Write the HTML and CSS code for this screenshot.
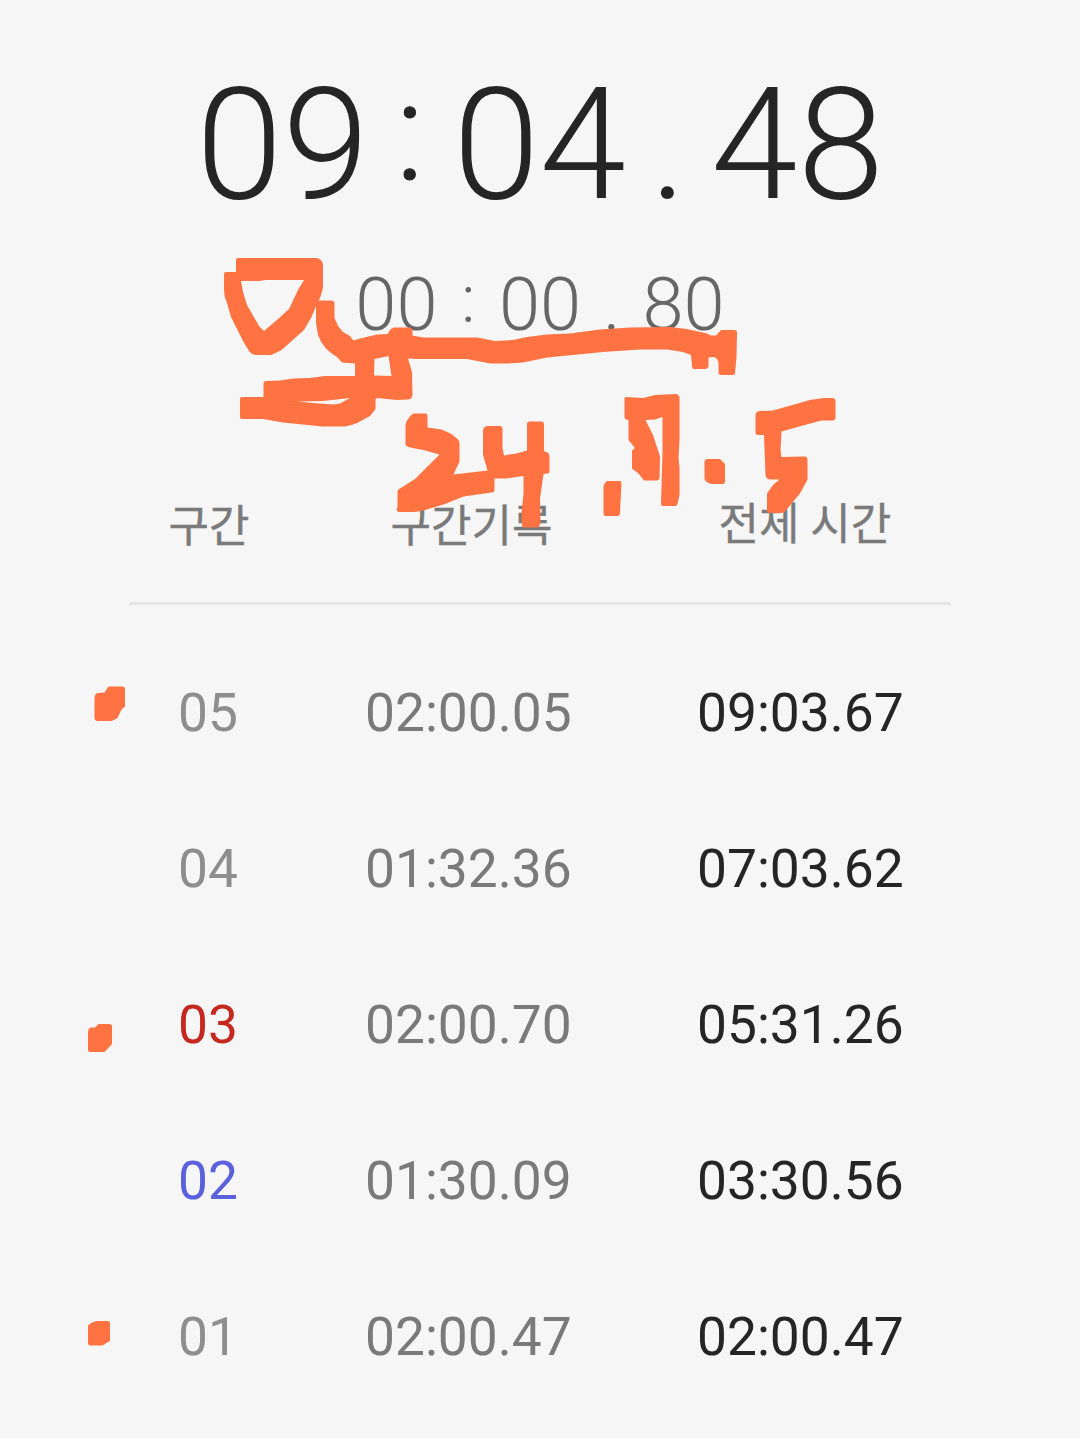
FILE: index.html
```
<!DOCTYPE html>
<html lang="ko">
<head>
    <meta charset="UTF-8">
    <meta name="viewport" content="width=device-width, initial-scale=1.0">
    <title>스톱워치</title>

    <link rel="stylesheet" href="styles.css">
</head>
<body>

<div class="stopwatch">
    <div class="total-time">
        <span>09</span><span class="colon">:</span><span>04</span><span class="dot">.</span><span>48</span>
    </div>
    <div class="lap-time">
        <span>00</span><span class="colon">:</span><span>00</span><span class="dot">.</span><span>80</span>
    </div>

    <div class="lap-header">
        <span>구간</span>
        <span>구간기록</span>
        <span class="header-total">전체 시간</span>
    </div>

    <div class="lap-list">
        <div class="lap">
            <span class="number">05</span>
            <span class="split">02:00.05</span>
            <span class="total">09:03.67</span>
        </div>
        <div class="lap">
            <span class="number">04</span>
            <span class="split">01:32.36</span>
            <span class="total">07:03.62</span>
        </div>
        <div class="lap slowest">
            <span class="number">03</span>
            <span class="split">02:00.70</span>
            <span class="total">05:31.26</span>
        </div>
        <div class="lap fastest">
            <span class="number">02</span>
            <span class="split">01:30.09</span>
            <span class="total">03:30.56</span>
        </div>
        <div class="lap">
            <span class="number">01</span>
            <span class="split">02:00.47</span>
            <span class="total">02:00.47</span>
        </div>
    </div>

    <!-- 펜 메모 -->
    <svg class="marker" width="1080" height="1438" viewBox="0 0 1080 1438" aria-hidden="true">
        <path d="M236 260Q236 258 238 258L317 258Q323 260 323 265L323 288Q321 297 317 304L311.500 317L304 330L295 338L281.500 350Q274 354 271 355L255 355Q251 354 249 351L243 341L231 317L227 303Q224 297 224 290L224 274Q224 272 226 272L236 272ZM241 281L243 292L247 305L259 326L264 331L278 319L289 309L298 290L304 280L265 280L260 281Z"/>
        <path d="M316 303Q317 300.500 319 300.500L332 300.500Q334.500 301 334.500 303L334.500 318L338 326L343 332L350 336L353.500 340.500L362 338L377 334.500L388 334Q389 329 394 327.500L410 327.500Q412.500 328 412.500 330L412.500 335.500L423 337.500L477 337.500L495 341L513 340L527 337L547 334.500L570 333.500L600 329.500L630 327.500L670 327L687 329L707 333.500L711 335.500L716 335.500L721 330L735 330Q737 330.500 737 332L736.500 357L735 373Q735 375 733 375L720 375Q718.500 374 718.500 372L718.500 363Q717 356 712 357L708.500 357.500L708.500 366Q708 369 705 369L694 369Q692 369 692 366L691 355L683 352L667 349.500L640 349.500L603 352L573 355L547 357.500L535 360L523 362.500L508 363.500L490 363.500L467 359L417 359L408 358.500L412 372L412.500 395Q412 399 408 399.500L397 400L377 398L375.500 399.500L375.500 409Q371 415 370 416L357 423Q350 426 345 426.500L322 426.500L283 422.500L263 419L242 419Q240 419 240 417L240 399Q240 397 242 397L263.500 397L263.500 383Q264 381 266 381L280 380.500L293 378.500L310 378L325 376L355 376L355 363.500L342 362.500L337 357Q323 349 318 335L316 323ZM374.500 359L388.500 356L391.500 376L374 375.500ZM298 401.500L323 401L350 398L340 403.500L333 404.500L313 403Z"/>
        <path d="M413 413.500L426 413.500Q427.500 414 427.500 416L427.500 427.500L441.500 429.500L451.500 434L457.500 439Q459.500 441 459.500 443L459.500 461.500L453.500 474.500L487.500 470.500L486 465L483 455L483 430Q484 426.500 487 426L500.500 426Q502.500 426.500 502.500 428.500L502.500 448L504 455.500L516.500 453.500L527 450.500L527 424Q527 421.500 529.500 421.500L542 421.500Q544 422 544 424L544 451L547.500 452.500Q549.500 453.500 549.500 457L549.500 471.500Q549.500 473.500 547.500 473.500L543.500 474L540 498.500L540.500 523Q539.500 527.500 536.500 527.500L525 527.500Q522 527.500 522 525L521.500 513.500L523.500 493.500L523.500 476L506.500 478.500L494.500 478.500L494.500 490Q494.500 492.500 491.500 492.500L463.500 496.500L445 504L423.500 510.500L413.500 512L399.500 512Q397.500 512 397.500 509.500L397.500 491.500Q398 489 400 488.500L415 479L426.500 467.500L439.500 454.500L423.500 450L410 447.500Q405.500 446 405.500 444L405.500 425Q406.500 419 413 413.500Z"/>
        <path d="M607 481L620 481Q621.500 481.500 621.500 483.500L620.500 502L620 513.500Q619.500 516 617.500 516L605.500 516Q603.500 516 603.500 513.500L603.500 486Q604 483 607 481Z"/>
        <path d="M626 397L643 398L655 395L676 394Q679.500 395 679.500 397.500L679.500 440L678.500 458L679.500 468L679.500 495L677.500 504Q677 506 675 506L663 506Q661 506 661 503.500L662.500 453L662.500 417L655 419.500L645.500 420L653 435L660 456.500L659.500 478Q659 480.500 656.500 480.500L644 480.500L638.500 473.500L632 468.500L632 450.500L635 448L628.500 440L628.500 420L626 419.500Q624.500 418 624.500 417L624.500 399Q624.500 397 626 397Z"/>
        <path d="M707 459L720 459L725 464L725 482Q725 484 722.500 484L712 484Q706 483 704.500 479L704.500 461.500Q705 459 707 459Z"/>
        <path d="M773 410.500L810 400L823.500 398L833 398Q835.500 398.500 835.500 401L835.500 417.500Q835.500 420.500 832.500 420.500L821.500 420.500L806.500 424.500L781.500 431.500L780.500 450L781.500 457L805 456.500Q807.500 457 807.500 459.500L807.500 479.500L800 493.500L791.500 503.500L786.500 510Q784 513 781.500 513L770 513Q767 513 767 510L767 493.500L773 485L779.500 479.500L770 479.500Q766 479 765.500 475L764 435L758.500 435Q755.500 435 755.500 432.500L755.500 415Q756 411 760 411Z"/>
        <path d="M108.500 686.500L123 686.500Q125 687 125 688.500L125 706.500L121.500 709.500L117.500 718L111.500 721L97.500 721Q94.500 720.500 94.500 718L94.500 698Q95 693 98 693L104.500 692.500Z"/>
        <path d="M98.500 1024L110 1024Q112 1024.500 112 1026L112 1044L104.500 1052L90.500 1052Q88 1052 88 1050L88 1031.500Q88.500 1028 91 1027.500L95 1027.500Z"/>
        <path d="M96 1321L108 1321Q110 1321.500 110 1323L110 1341L107 1342.500L102.500 1345.500L90 1345.500Q88 1345 88 1343L88 1325.500Q91 1322 96 1321Z"/>
    </svg>
</div>

</body>
</html>
```
FILE: styles.css
```
body {
    margin: 0;
    background-color: #f6f6f6;
    font-family: Roboto, "Noto Sans CJK KR", sans-serif;
    color: #252525;
}

.stopwatch {
    position: relative;
    width: 1080px;
    height: 1438px;
    overflow: hidden;
}

.total-time,
.lap-time {
    display: flex;
    justify-content: center;
    font-weight: 300;
}

.total-time {
    padding-top: 54px;
    font-size: 156px;
    line-height: 182px;
}

.lap-time {
    padding-top: 25px;
    font-size: 74px;
    line-height: 88px;
    color: #666;
}

.colon,
.dot {
    width: 85px;
    text-align: center;
}

.total-time .colon {
    width: 82px;
    margin: -13px 2px 0 0;
    font-size: 137px;
    -webkit-text-stroke: 1px #252525;
}

.lap-time .colon,
.lap-time .dot {
    width: 61.5px;
}

.lap-time .colon {
    margin-top: -6px;
    font-size: 67px;
}

.lap-header {
    display: grid;
    grid-template-columns: 222px 328px auto;
    box-sizing: border-box;
    height: 256px;
    margin: 0 129px;
    padding: 146px 0 0 39.5px;
    border-bottom: 3px solid #e4e4e4;
    font-size: 44px;
    line-height: 64px;
    white-space: nowrap;
    color: #7a7a7a;
    -webkit-text-stroke: 0.4px #7a7a7a;
}

.header-total {
    margin-top: -2px;
}

.lap-list {
    padding-top: 30px;
}

.lap {
    display: grid;
    grid-template-columns: 187px 332px auto;
    height: 156px;
    padding-left: 178px;
    font-size: 53.3px;
    line-height: 156px;
}

.number {
    color: #8e8e8e;
}

.split {
    color: #7a7a7a;
}

.slowest .number {
    color: #c5281f;
}

.fastest .number {
    color: #5b61dc;
}

.marker {
    position: absolute;
    top: 0;
    left: 0;
    fill: #ff7343;
    fill-rule: evenodd;
}
```
